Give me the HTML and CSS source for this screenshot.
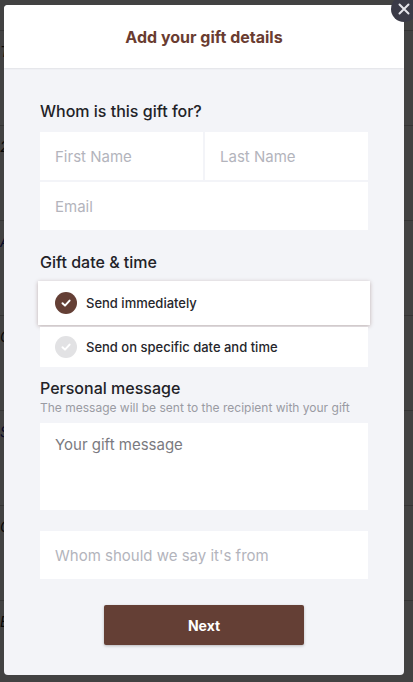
FILE: index.html
```html
<!DOCTYPE html>
<html lang="en">
<head>
    <meta charset="UTF-8">
    <title>Add your gift details</title>
    <link rel="stylesheet" href="styles.css">
</head>
<body>
<div class="page">
    <div class="pageRow">Type</div>
    <div class="pageRow">2</div>
    <div class="pageRow pageLink">Add a gift card</div>
    <div class="pageRow">Occasions</div>
    <div class="pageRow pageLink">Send</div>
    <div class="pageRow">Contact information</div>
    <div class="pageRow">Event type &nbsp; &nbsp; &nbsp; &nbsp; Occasion</div>
</div>

<div class="overlay">
    <div class="modal">
        <button class="closeButton" type="button" aria-label="Close">
            <svg width="12" height="12" viewBox="0 0 12 12">
                <path d="M1.5 1.5 L10.5 10.5 M10.5 1.5 L1.5 10.5" stroke="#e4e4ea" stroke-width="2" stroke-linecap="round"/>
            </svg>
        </button>

        <div class="modalHeader">
            <h1>Add your gift details</h1>
        </div>

        <form class="modalBody">
            <h2>Whom is this gift for?</h2>
            <div class="fieldGrid">
                <input type="text" placeholder="First Name">
                <input type="text" placeholder="Last Name">
                <input type="email" class="wide" placeholder="Email">
            </div>

            <h2 class="spaced">Gift date &amp; time</h2>
            <div class="options">
                <label class="option selected">
                    <span class="check">
                        <svg width="12" height="12" viewBox="0 0 12 12">
                            <path d="M2.5 6.2 L5 8.6 L9.6 3.6" fill="none" stroke="#fff" stroke-width="2" stroke-linecap="round" stroke-linejoin="round"/>
                        </svg>
                    </span>
                    Send immediately
                </label>
                <label class="option">
                    <span class="check">
                        <svg width="12" height="12" viewBox="0 0 12 12">
                            <path d="M2.5 6.2 L5 8.6 L9.6 3.6" fill="none" stroke="#fff" stroke-width="2" stroke-linecap="round" stroke-linejoin="round"/>
                        </svg>
                    </span>
                    Send on specific date and time
                </label>
            </div>

            <h2 class="message">Personal message</h2>
            <p class="hint">The message will be sent to the recipient with your gift</p>
            <textarea placeholder="Your gift message"></textarea>

            <input type="text" class="fromField" placeholder="Whom should we say it's from">

            <div class="actions">
                <button type="button" class="nextButton">Next</button>
            </div>
        </form>
    </div>
</div>
</body>
</html>
```

FILE: styles.css
```css
body {
    margin: 0;
    font-family: Inter, "Noto Sans", sans-serif;
    background: #fff;
}

.page {
    height: 682px;
    overflow: hidden;
    padding: 30px 0 0 0;
    font-size: 14px;
    color: #222;
}

.pageRow {
    border-top: 1px solid #ccc;
    padding: 12px 0;
    height: 70px;
    font-style: italic;
}

.pageLink {
    color: #1a2a9a;
}

.overlay {
    position: fixed;
    top: 0;
    left: 0;
    right: 0;
    bottom: 0;
    background: rgba(0, 0, 0, 0.74);
}

.modal {
    position: absolute;
    left: 4px;
    top: 5px;
    width: 400px;
    height: 670px;
    background: #f3f4f8;
    border-radius: 4px;
}

.closeButton {
    position: absolute;
    top: -9px;
    right: -13px;
    width: 26px;
    height: 26px;
    border: none;
    border-radius: 50%;
    background: #3b3b47;
    display: flex;
    align-items: center;
    justify-content: center;
    padding: 0;
    z-index: 2;
}

.modalHeader {
    height: 63px;
    background: #fff;
    border-radius: 4px 4px 0 0;
    box-shadow: 0 1px 2px rgba(0, 0, 0, 0.07);
    display: flex;
    align-items: center;
    justify-content: center;
}

.modalHeader h1 {
    margin: 0;
    font-size: 16px;
    font-weight: 700;
    color: #6a3c31;
}

.modalBody {
    padding: 33px 36px 0;
}

h2 {
    margin: 0;
    font-size: 16px;
    line-height: 20px;
    font-weight: 500;
    color: #222227;
}

.fieldGrid {
    display: grid;
    grid-template-columns: 1fr 1fr;
    gap: 2px;
    margin-top: 11px;
}

.fieldGrid .wide {
    grid-column: 1 / 3;
}

input,
textarea {
    display: block;
    box-sizing: border-box;
    width: 100%;
    border: none;
    outline: none;
    background: #fff;
    font-family: Inter, "Noto Sans", sans-serif;
    font-size: 15px;
    color: #333;
    padding: 0 15px;
    height: 48px;
}

input::placeholder {
    color: #b3b4bc;
}

.spaced {
    margin-top: 22px;
}

.options {
    margin-top: 9px;
    display: flex;
    flex-direction: column;
    gap: 2px;
}

.option {
    display: flex;
    align-items: center;
    gap: 9px;
    height: 40px;
    padding: 0 15px;
    background: #fff;
    font-size: 13px;
    font-weight: 500;
    color: #26262b;
}

.option.selected {
    height: 44px;
    margin: 0 -2px;
    padding: 0 17px;
    box-shadow: 0 1px 4px rgba(90, 50, 40, 0.35);
}

.check {
    width: 22px;
    height: 22px;
    border-radius: 50%;
    background: #e2e2e4;
    display: flex;
    align-items: center;
    justify-content: center;
}

.selected .check {
    background: #643f35;
}

.message {
    margin-top: 11px;
}

.hint {
    margin: 2px 0 0;
    font-size: 12px;
    line-height: 16px;
    color: #9a9ba3;
}

textarea {
    margin-top: 7px;
    height: 87px;
    padding-top: 12px;
    resize: none;
}

textarea::placeholder {
    color: #7a7a80;
}

.fromField {
    margin-top: 21px;
}

.actions {
    display: flex;
    justify-content: center;
    margin-top: 26px;
}

.nextButton {
    width: 200px;
    height: 40px;
    border: none;
    border-radius: 2px;
    background: #643f35;
    color: #fff;
    font-family: Inter, "Noto Sans", sans-serif;
    font-size: 14px;
    font-weight: 700;
    box-shadow: 0 1px 3px rgba(0, 0, 0, 0.25);
}
```
